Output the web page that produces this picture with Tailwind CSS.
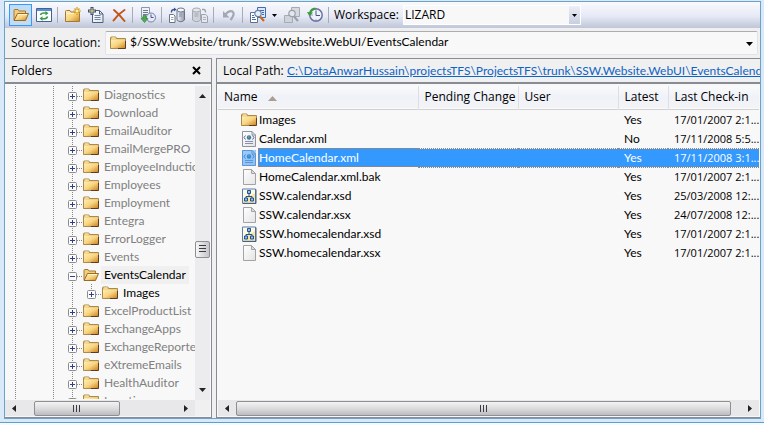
<!DOCTYPE html>
<html lang="en">
<head>
<meta charset="utf-8">
<title>Source Control Explorer</title>
<script src="https://cdn.jsdelivr.net/npm/@tailwindcss/browser@4"></script>
</head>
<body class="h-screen overflow-hidden bg-[#f4faff] font-['Open_Sans','Noto_Sans',sans-serif] text-xs text-black">
<svg class="absolute size-0" aria-hidden="true">
  <defs>
    <linearGradient id="gold" x1="0" y1="0" x2="1" y2="1"><stop offset="0" stop-color="#fff0ae"/><stop offset=".5" stop-color="#f8d584"/><stop offset="1" stop-color="#cf861f"/></linearGradient>
    <linearGradient id="cyl" x1="0" x2="1"><stop offset="0" stop-color="#f4f6fa"/><stop offset="1" stop-color="#8c96a8"/></linearGradient>
    <linearGradient id="paper" x1="0" y1="0" x2="1" y2="1"><stop offset="0" stop-color="#fff"/><stop offset="1" stop-color="#e4e4e6"/></linearGradient>
  </defs>
  <symbol id="folder" viewBox="0 0 16 16">
    <path d="M.5 13V3q0-1 1-1h4q1 0 1 1.500H15.500v9.500z" fill="#e8c070" stroke="#a98a4c"/>
    <path d="M1 4.500h14V13H1z" fill="url(#gold)"/>
    <path d="M.5 4.500V13.500H10" fill="none" stroke="#a98a4c"/>
    <path d="M15.500 6v7.500H8" fill="none" stroke="#5a3c28"/>
    <path d="M2 3h3.500" stroke="#fff3c4"/>
  </symbol>
  <symbol id="folder-open" viewBox="0 0 16 16">
    <path d="M1 13V3.500q0-1 1-1h3l1 1.500h6.500v3" fill="#f1cd7c" stroke="#a07a3a"/>
    <path d="M1 13.500L4.500 6.500H15.500L12.500 13.500z" fill="url(#gold)" stroke="#9a6a26"/>
    <path d="M5 7.500h9" stroke="#fff6cf"/>
  </symbol>
  <symbol id="refresh" viewBox="0 0 16 16">
    <path d="M.5 1.500h15v13H.5z" fill="#fff" stroke="#3f6196"/>
    <path d="M1 2h14v2H1z" fill="#5f8ed0"/>
    <path d="M4.500 8q.5-2 3.500-2h2" fill="none" stroke="#3d9a4a" stroke-width="1.600"/>
    <path d="M9.500 4l3 2.200-3 2.200z" fill="#3d9a4a"/>
    <path d="M11.500 9.500q-.5 2.200-3.500 2.200H6" fill="none" stroke="#3d9a4a" stroke-width="1.600"/>
    <path d="M6.500 9.300l-3 2.300 3 2.300z" fill="#3d9a4a"/>
  </symbol>
  <symbol id="new-folder" viewBox="0 0 16 16">
    <path d="M.5 14.500V4.500q0-1 1-1h3.500l1 1.500H14.500v9.500z" fill="url(#gold)" stroke="#a07a3a"/>
    <path d="M1.500 6.500h12" stroke="#fff3c4"/>
    <path d="M12 0v8M8 4h8M9.500 1.500l5 5M14.500 1.500l-5 5" stroke="#d89a18" stroke-width="1.200"/>
    <circle cx="12" cy="4" r="1.500" fill="#fff3a0"/>
  </symbol>
  <symbol id="new-file" viewBox="0 0 16 16">
    <path d="M4.500 3.500h7l3.500 3.500v8.500H4.500z" fill="url(#paper)" stroke="#4b6184"/>
    <path d="M11.500 3.500V7H15" fill="none" stroke="#4b6184"/>
    <path d="M6.500 8.500h6M6.500 10.500h6M6.500 12.500h6" stroke="#6f87ad"/>
    <path d="M4 0v8M0 4h8" stroke="#3a4f78" stroke-width="3"/>
    <path d="M4 1v6M1 4h6" stroke="#f5d87a"/>
  </symbol>
  <symbol id="delete" viewBox="0 0 16 16">
    <path d="M3 3Q8 7 13.500 14M13.500 3Q7 7 2.500 13.500" fill="none" stroke="#c2561a" stroke-width="2" stroke-linecap="round"/>
  </symbol>
  <symbol id="get-latest" viewBox="0 0 16 16">
    <path d="M1.500.5h8v10h-8z" fill="#eef1f7" stroke="#8b96aa"/>
    <path d="M3 3.500h5M3 5.500h5M3 7.500h5" stroke="#6d7a92"/>
    <circle cx="11" cy="10.500" r="4.500" fill="#e4eaf8" stroke="#7681a6"/>
    <path d="M11 7.500v3h2.500" fill="none" stroke="#4d5578"/>
    <path d="M3 8.500h3v3h2L4.500 15.500 1 11.500h2z" fill="#4bb04c" stroke="#2f7a35" stroke-width=".6"/>
  </symbol>
  <symbol id="check-out" viewBox="0 0 16 16">
    <path d="M8 3v10q4 3.500 7.500 0V3z" fill="url(#cyl)" stroke="#69748a"/>
    <ellipse cx="11.800" cy="3" rx="3.800" ry="2" fill="#f3f5f9" stroke="#69748a"/>
    <path d="M10 7h3M10 9h3" stroke="#8590a5"/>
    <path d="M.5 7.500h4l1.500 1.500v6.500H.5z" fill="#fff" stroke="#69748a"/>
    <path d="M2 10.500h2.500M2 12.500h2.500" stroke="#9aa4b6"/>
    <path d="M2.500 5.500Q2 2.500 5.500 2.500" fill="none" stroke="#3c4f86" stroke-width="1.400"/>
    <path d="M5 .5l2.500 2L5 4.500z" fill="#3c4f86"/>
  </symbol>
  <symbol id="check-in" viewBox="0 0 16 16">
    <path d="M.5 3v10q4 3.500 8 0V3z" fill="#ced2da" stroke="#a3a8b3"/>
    <ellipse cx="4.500" cy="3" rx="4" ry="2" fill="#e3e6eb" stroke="#a3a8b3"/>
    <path d="M2.500 7h4M2.500 9h4" stroke="#a3a8b3"/>
    <path d="M9.500 7.500h4l2 1.500v6.500h-6z" fill="#e6e8ed" stroke="#9da2ae"/>
    <path d="M11 10.500h3M11 12.500h3" stroke="#aeb3bd"/>
    <path d="M10 2.500h2q1.500 0 1.500 3" fill="none" stroke="#9da2ae" stroke-width="1.400"/>
  </symbol>
  <symbol id="undo" viewBox="0 0 16 16">
    <path d="M4 8Q8 3 11.500 4.500 14.500 7 9.500 13" fill="none" stroke="#a2a7b4" stroke-width="2.200"/>
    <path d="M2 4v6.500h6.500z" fill="#a2a7b4"/>
  </symbol>
  <symbol id="compare" viewBox="0 0 16 16">
    <path d="M7.500.5h8v10h-8z" fill="#dce8fb" stroke="#3d6cb4"/>
    <path d="M10 3.500h4M12 5.500h2M12 7.500h2" stroke="#3d6cb4"/>
    <path d="M.5 5.500h7v10h-7z" fill="#fff" stroke="#5f6f8e"/>
    <path d="M2 8.500h2M2 10.500h3M2 12.500h4" stroke="#3d6cb4"/>
    <path d="M10 9.500l4 4.500" stroke="#c66a22" stroke-width="2.200"/>
    <circle cx="8" cy="6.500" r="3.200" fill="#e3f0ff" stroke="#7080a0" stroke-width="1.200"/>
  </symbol>
  <symbol id="view" viewBox="0 0 16 16">
    <path d="M7.500.5h8v9h-8z" fill="#d6d9e0" stroke="#a5aab5"/>
    <path d="M.5 8.500h8v7h-8z" fill="#cfd3db" stroke="#a5aab5"/>
    <path d="M10 9.500l4 4.500" stroke="#9a9fab" stroke-width="2.200"/>
    <circle cx="8" cy="6.500" r="3.200" fill="#e6e8ed" stroke="#9a9fab" stroke-width="1.200"/>
  </symbol>
  <symbol id="history" viewBox="0 0 16 16">
    <circle cx="9" cy="8" r="6.200" fill="#eef2fc" stroke="#6c74a0" stroke-width="1.500"/>
    <path d="M9 4v4.500h4M9 2.500v1M9 12.500v1M4.500 8h1" fill="none" stroke="#4f5680"/>
    <path d="M8.500 1.500Q4 2 3 6" fill="none" stroke="#3f9b3f" stroke-width="2.200"/>
    <path d="M0 5l6 .5-3.500 4z" fill="#3f9b3f"/>
  </symbol>
  <symbol id="xml" viewBox="0 0 16 16">
    <path d="M1.500.5h9.500l3.500 3.500v11.500h-13z" fill="url(#paper)" stroke="#8d93a2"/>
    <path d="M11 .5V4h3.500" fill="none" stroke="#8d93a2"/>
    <path d="M4.500 4.500L3 6.500l1.500 2M11.500 4.500l1.500 2-1.500 2" fill="none" stroke="#5d6580"/>
    <circle cx="8" cy="6.500" r="2.200" fill="#3c74b8"/><path d="M7 5h1.500v2H7z" fill="#58a868"/>
    <path d="M4 10.500h8M4 12.500h8" stroke="#8a8fae"/>
  </symbol>
  <symbol id="file" viewBox="0 0 16 16">
    <path d="M2.500.5h8l4 4v11h-12z" fill="url(#paper)" stroke="#a3a3a6"/>
    <path d="M10.500.5v4h4z" fill="#dcdcde" stroke="#a3a3a6"/>
  </symbol>
  <symbol id="xsd" viewBox="0 0 16 16">
    <path d="M1.500 1h13v14h-13z" fill="#fffbe2" stroke="#5b7fb0"/>
    <path d="M2 12L14 5v9.500H2z" fill="#f7e6a0"/>
    <path d="M1.500 15.500h13.500v-14" fill="none" stroke="#4a5f86"/>
    <path d="M8 6v2.500M5 10V8.500h6V10" fill="none" stroke="#27508f"/>
    <path d="M6.500 2.500h3v3h-3zM3.500 10h3v3h-3zM9.500 10h3v3h-3z" fill="#8fbdf0" stroke="#27508f"/>
  </symbol>
</svg>

<div class="flex h-full flex-col pb-[2px]">
<div class="flex min-h-0 flex-1 flex-col border-b border-[#5fa0c8] bg-[#d9e9f9] pr-[3px] pb-[3px] pl-1">
<main class="mt-px flex min-h-0 flex-1 flex-col border border-[#6da3c2] bg-[#f0f0f0]">

  <div role="toolbar" aria-label="Source control" class="flex h-[26px] shrink-0 items-center bg-linear-to-b from-[#fafafd] via-[#e6e9f6] via-55% to-[#bfc6d7] pl-1">
    <button aria-label="Folders" aria-pressed="true" class="flex h-[22px] w-[23px] items-center justify-center border border-[#3399ff] bg-[#c2dcf5]"><svg class="size-4"><use href="#folder-open"/></svg></button>
    <button aria-label="Refresh" class="flex w-[23px] justify-center"><svg class="size-4"><use href="#refresh"/></svg></button>
    <span class="mr-[3px] ml-[2px] h-4 w-px bg-[#a6abba]"></span>
    <button aria-label="New folder" class="flex w-[23px] justify-center"><svg class="size-4"><use href="#new-folder"/></svg></button>
    <button aria-label="Add files" class="flex w-[23px] justify-center"><svg class="size-4"><use href="#new-file"/></svg></button>
    <button aria-label="Delete" class="flex w-[23px] justify-center"><svg class="size-4"><use href="#delete"/></svg></button>
    <span class="mr-[3px] ml-[2px] h-4 w-px bg-[#a6abba]"></span>
    <button aria-label="Get latest version" class="flex w-[23px] justify-center"><svg class="size-4"><use href="#get-latest"/></svg></button>
    <span class="mr-[3px] ml-[2px] h-4 w-px bg-[#a6abba]"></span>
    <button aria-label="Check out" class="flex w-[23px] justify-center"><svg class="size-4"><use href="#check-out"/></svg></button>
    <button aria-label="Check in" disabled class="flex w-[23px] justify-center"><svg class="size-4"><use href="#check-in"/></svg></button>
    <span class="mr-[3px] ml-[2px] h-4 w-px bg-[#a6abba]"></span>
    <button aria-label="Undo" disabled class="flex w-[23px] justify-center"><svg class="size-4"><use href="#undo"/></svg></button>
    <span class="mr-[3px] ml-[2px] h-4 w-px bg-[#a6abba]"></span>
    <button aria-label="Compare" class="flex w-[23px] justify-center"><svg class="size-4"><use href="#compare"/></svg></button>
    <button aria-label="Compare options" class="flex w-[11px] justify-center"><svg class="h-[3px] w-[5px]" viewBox="0 0 5 3"><path d="M0 0h5L2.500 3z"/></svg></button>
    <button aria-label="View" disabled class="flex w-[23px] justify-center"><svg class="size-4"><use href="#view"/></svg></button>
    <button aria-label="History" class="flex w-[23px] justify-center"><svg class="size-4"><use href="#history"/></svg></button>
    <span class="mr-[3px] ml-[2px] h-4 w-px bg-[#a6abba]"></span>
    <label for="workspace" class="w-[71px] pl-[2px] whitespace-nowrap">Workspace:</label>
    <div class="relative h-5 w-[178px]">
      <select id="workspace" class="h-full w-full appearance-none border border-white bg-[#f8f8f8] pl-px leading-4"><option>LIZARD</option></select>
      <span class="pointer-events-none absolute inset-y-px right-px flex w-[11px] items-center justify-center bg-linear-to-b from-[#eceef8] to-[#c9cfdf]"><svg class="h-[3px] w-[5px]" viewBox="0 0 5 3"><path d="M0 0h5L2.500 3z"/></svg></span>
    </div>
  </div>

  <div class="flex h-[30px] shrink-0 items-center pr-[2px] pl-[6px]">
    <label for="source" class="w-[94px] whitespace-nowrap">Source location:</label>
    <div class="relative h-6 min-w-0 flex-1">
      <select id="source" class="h-full w-full appearance-none rounded-[2px] border border-[#e2e3ea] border-t-[#abadb3] bg-[#f8f8f8] pb-[2px] pl-6 font-['Lato','Open_Sans',sans-serif] leading-4"><option>$/SSW.Website/trunk/SSW.Website.WebUI/EventsCalendar</option></select>
      <svg class="pointer-events-none absolute top-1 left-[5px] size-4"><use href="#folder"/></svg>
      <svg class="pointer-events-none absolute top-[11px] right-[5px] h-1 w-[7px]" viewBox="0 0 7 4"><path d="M0 0h7L3.500 4z"/></svg>
    </div>
  </div>

  <div class="flex min-h-0 flex-1 gap-1">
    <section class="flex w-[207px] shrink-0 flex-col border border-l-0 border-[#868b95]">
      <header class="flex h-[25px] shrink-0 items-center justify-between border-b-2 border-[#868b95] pr-[10px] pl-[6px]">
        <h2>Folders</h2>
        <button aria-label="Close"><svg class="size-[9px]" viewBox="0 0 9 9"><path d="M1 1l7 7M8 1L1 8" stroke="#000" stroke-width="2"/></svg></button>
      </header>
      <div class="flex min-h-0 flex-1 flex-col bg-[#f8f8f8] pt-[2px] pr-px pb-px">
        <div class="flex min-h-0 flex-1">
          <ul id="tree" role="tree" aria-label="Folders" class="mb-px min-w-0 flex-1 overflow-hidden font-['Lato','Open_Sans',sans-serif]"></ul>
          <div role="scrollbar" aria-label="Folders vertical" aria-controls="tree" aria-valuenow="52" class="flex w-[15px] shrink-0 flex-col items-center bg-[#ececee] py-2">
            <svg class="h-1 w-[7px]" viewBox="0 0 7 4"><path d="M0 4h7L3.500 0z" fill="#222"/></svg>
            <span class="flex-[142]"></span>
            <span class="flex h-[17px] w-[15px] items-center justify-center rounded-[2px] border border-[#8f8f92] bg-linear-to-r from-[#f6f6f6] to-[#c6c6ca]"><svg class="h-[8px] w-[7px]" viewBox="0 0 7 8"><path d="M0 .5h7M0 3.500h7M0 6.500h7" stroke="#3b3b46"/></svg></span>
            <span class="flex-[130]"></span>
            <svg class="h-1 w-[7px]" viewBox="0 0 7 4"><path d="M0 0h7L3.500 4z" fill="#222"/></svg>
          </div>
        </div>
        <div class="flex h-4 shrink-0">
          <div role="scrollbar" aria-label="Folders horizontal" aria-controls="tree" aria-orientation="horizontal" aria-valuenow="20" class="flex min-w-0 flex-1 items-center bg-[#e8e8ea] px-[7px]">
            <svg class="h-[7px] w-1" viewBox="0 0 4 7"><path d="M4 0v7L0 3.500z" fill="#222"/></svg>
            <span class="flex-[18]"></span>
            <span class="flex h-[15px] w-[86px] items-center justify-center rounded-[2px] border border-[#8f8f92] bg-linear-to-b from-[#f4f4f4] via-[#dcdcde] to-[#bcbcc1]"><svg class="h-[7px] w-2" viewBox="0 0 8 7"><path d="M.5 0v7M3.500 0v7M6.500 0v7" stroke="#3b3b46"/></svg></span>
            <span class="flex-[63]"></span>
            <svg class="h-[7px] w-1" viewBox="0 0 4 7"><path d="M0 0v7L4 3.500z" fill="#222"/></svg>
          </div>
          <span class="w-[15px] bg-[#f0f0f0]"></span>
        </div>
      </div>
    </section>

    <section class="flex min-w-0 flex-1 flex-col border border-r-0 border-[#868b95]">
      <header class="flex h-[25px] shrink-0 items-center border-b-2 border-[#868b95] pl-[6px] whitespace-nowrap">
        <h2 class="w-16 shrink-0">Local Path:</h2>
        <a href="#" class="min-w-0 flex-1 overflow-hidden font-['Lato','Open_Sans',sans-serif] text-[#0f63c4] underline">C:\DataAnwarHussain\projectsTFS\ProjectsTFS\trunk\SSW.Website.WebUI\EventsCalend</a>
      </header>
      <div class="flex min-h-0 flex-1 flex-col bg-[#f8f8f8] px-px pt-[2px] pb-px">
        <div class="min-h-0 flex-1 overflow-hidden">
          <table class="w-full table-fixed border-collapse text-left whitespace-nowrap">
            <colgroup><col class="w-[200px]"><col class="w-[100px]"><col class="w-[100px]"><col class="w-[50px]"><col></colgroup>
            <thead>
              <tr class="h-[23px] border-b border-[#cfd0d4] bg-linear-to-b from-[#fafafa] via-[#f0f2f9] to-[#f4f4f6]">
                <th class="border-r border-[#dedfe4] pl-[6px] font-normal">Name<svg class="ml-[10px] inline-block h-[5px] w-[9px] align-middle" viewBox="0 0 9 5"><path d="M0 5h9L4.500 0z" fill="#a89f93"/></svg></th>
                <th class="border-r border-[#dedfe4] pl-[6px] font-normal">Pending Change</th>
                <th class="border-r border-[#dedfe4] pl-[6px] font-normal">User</th>
                <th class="border-r border-[#dedfe4] pl-[6px] font-normal">Latest</th>
                <th class="overflow-hidden pl-[6px] font-normal">Last Check-in</th>
              </tr>
              <tr class="h-px"></tr>
            </thead>
            <tbody id="files" class="font-['Lato','Open_Sans',sans-serif]"></tbody>
          </table>
        </div>
        <div role="scrollbar" aria-label="Files horizontal" aria-controls="files" aria-orientation="horizontal" aria-valuenow="0" class="flex h-4 shrink-0 items-center bg-[#e8e8ea] px-[7px]">
          <svg class="h-[7px] w-1" viewBox="0 0 4 7"><path d="M4 0v7L0 3.500z" fill="#222"/></svg>
          <span class="ml-[7px] flex h-[15px] flex-1 items-center justify-center rounded-[2px] border border-[#8f8f92] bg-linear-to-b from-[#f4f4f4] via-[#dcdcde] to-[#bcbcc1]"><svg class="h-[7px] w-2" viewBox="0 0 8 7"><path d="M.5 0v7M3.500 0v7M6.500 0v7" stroke="#3b3b46"/></svg></span>
          <svg class="ml-[17px] h-[7px] w-1" viewBox="0 0 4 7"><path d="M0 0v7L4 3.500z" fill="#222"/></svg>
        </div>
      </div>
    </section>
  </div>
</main>
</div>
</div>

<script>
const folders = ['Diagnostics', 'Download', 'EmailAuditor', 'EmailMergePRO', 'EmployeeInduction', 'Employees', 'Employment', 'Entegra', 'ErrorLogger', 'Events', 'EventsCalendar', 'Images', 'ExcelProductList', 'ExchangeApps', 'ExchangeReporter', 'eXtremeEmails', 'HealthAuditor', 'Locations'];
const node = (open, tail) => `<button aria-label="${open ? 'Collapse' : 'Expand'}" class="shrink-0"><svg class="block h-[18px] w-[15px]" viewBox="0 0 15 18">
  <path d="M4.500 0v${tail ? 18 : 6}M9 10.500h6" stroke="#888" stroke-dasharray="1 1"/>
  <rect x=".5" y="6.500" width="8" height="8" rx="1" fill="#fcfcfc" stroke="#8c8c8c"/>
  <path d="M2 10.500h5${open ? '' : 'M4.500 8v5'}" stroke="#2c3f92"/></svg></button>`;
document.getElementById('tree').innerHTML = folders.map((name, i) => {
  const open = i === 10, child = i === 11;
  return `<li role="treeitem" class="flex h-[18px] items-center pl-[10px] whitespace-nowrap">
    <svg class="h-[18px] w-[53px] shrink-0" viewBox="0 0 53 18"><path d="M.5 0v18M38.500 0v18" stroke="#888" stroke-dasharray="1 1"/></svg>
    ${child ? '<svg class="h-[18px] w-[19px] shrink-0" viewBox="0 0 19 18"><path d="M4.500 0v18" stroke="#888" stroke-dasharray="1 1"/></svg>' : ''}
    ${node(open, !child)}
    <svg class="size-4 shrink-0"><use href="${open ? '#folder-open' : '#folder'}"/></svg>
    <span class="${open ? 'ml-[2px] bg-[#f0f0f0] px-[3px] leading-[18px]' : child ? 'ml-[2px] pl-[3px] leading-[18px]' : 'ml-[2px] pl-[3px] leading-[18px] text-[#808080]'}">${name}</span></li>`;
}).join('');

const files = [
  ['folder', 'Images', 'Yes', '17/01/2007 2:1...'],
  ['xml', 'Calendar.xml', 'No', '17/11/2008 5:5...'],
  ['xml', 'HomeCalendar.xml', 'Yes', '17/11/2008 3:1...'],
  ['file', 'HomeCalendar.xml.bak', 'Yes', '17/01/2007 2:1...'],
  ['xsd', 'SSW.calendar.xsd', 'Yes', '25/03/2008 12:...'],
  ['file', 'SSW.calendar.xsx', 'Yes', '24/07/2008 12:...'],
  ['xsd', 'SSW.homecalendar.xsd', 'Yes', '17/01/2007 2:1...'],
  ['file', 'SSW.homecalendar.xsx', 'Yes', '17/01/2007 2:1...']
];
document.getElementById('files').innerHTML = files.map(([icon, name, latest, date], i) => {
  const sel = i === 2;
  const cell = sel ? 'overflow-hidden border-y border-dotted border-[#c77a33] bg-[#3399ff] p-0 pl-[6px] text-white' : 'overflow-hidden p-0 pl-[6px]';
  return `<tr class="h-[19px] leading-[17px]">
    <td class="p-0 pl-[23px]"><div class="flex items-center"><span class="relative h-4 w-[17px] shrink-0"><svg class="size-4"><use href="#${icon}"/></svg>${sel ? '<span class="absolute inset-y-0 left-px w-[14px] bg-[#3399ff]/50"></span>' : ''}</span>
      <span class="${sel ? 'flex-1 border-y border-l border-dotted border-[#c77a33] bg-[#3399ff] text-white' : 'flex-1 pl-px'}">${name}</span></div></td>
    <td class="${cell}"></td><td class="${cell}"></td><td class="${cell}">${latest}</td><td class="${cell}"><span class="block font-['Open_Sans','Noto_Sans',sans-serif] text-[11px] leading-[17px]">${date}</span></td></tr>`;
}).join('');
</script>
</body>
</html>
